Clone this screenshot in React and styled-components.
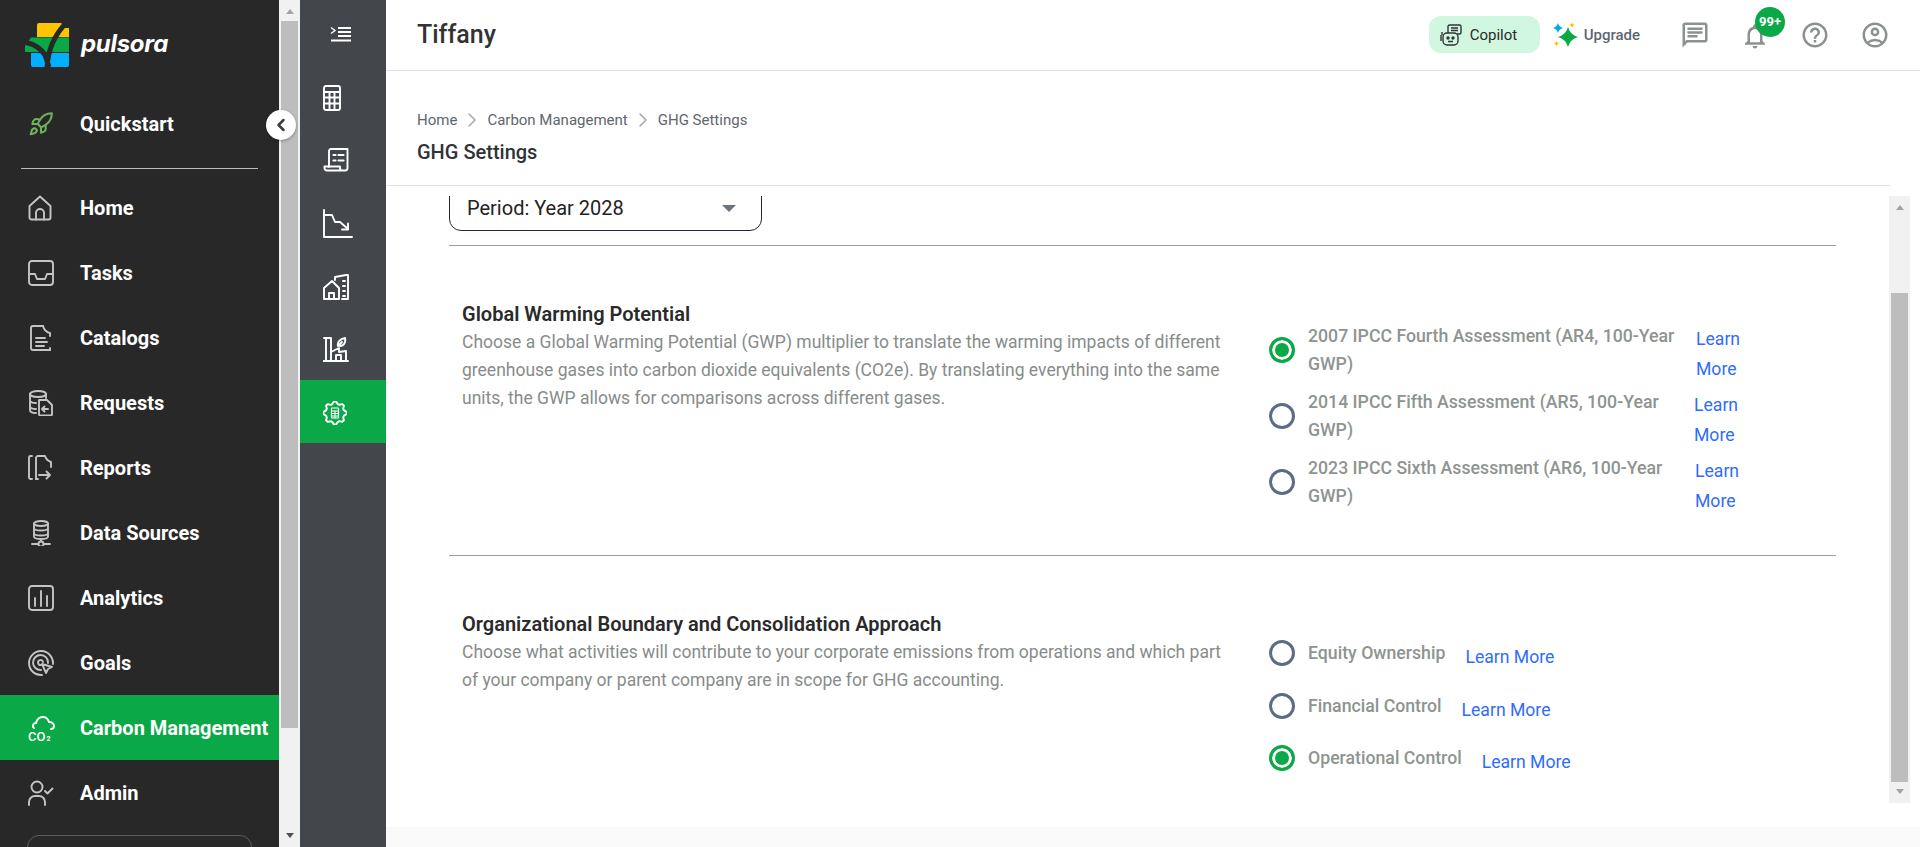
import React from "react"
import styled, { createGlobalStyle } from "styled-components"
import { ChevronLeft, ChevronRight, Rocket } from "lucide-react"
import {
  MdHelpOutline,
  MdOutlineAccountCircle,
  MdOutlineChat,
  MdOutlineNotifications,
} from "react-icons/md"

const GlobalStyle = createGlobalStyle`
  html, body {
    margin: 0;
    height: 847px;
    overflow: hidden;
    background: #fff;
    font-family: Roboto, "Liberation Sans", sans-serif;
  }
  * { box-sizing: border-box; }
`

const Glyph = ({ size = 26, box = 26, children }) => (
  <GlyphSvg width={size} height={size} viewBox={`0 0 ${box} ${box}`}>
    {children}
  </GlyphSvg>
)

const GlyphSvg = styled.svg`
  display: block;
  flex: none;
  fill: none;
  stroke: currentColor;
  stroke-width: 1.9;
  stroke-linecap: round;
  stroke-linejoin: round;
`

// four point star used by the upgrade sparkle
const star = (cx, cy, r) => {
  const k = r * 0.22
  return `M${cx} ${cy - r}Q${cx + k} ${cy - k} ${cx + r} ${cy}Q${cx + k} ${cy + k} ${cx} ${cy + r}Q${cx - k} ${cy + k} ${cx - r} ${cy}Q${cx - k} ${cy - k} ${cx} ${cy - r}Z`
}

// scalloped gear outline, 8 teeth
const gearPath = () => {
  const pts = []
  for (let i = 0; i < 32; i++) {
    const a = (i / 32) * Math.PI * 2
    const r = i % 4 === 0 || i % 4 === 1 ? 11.5 : 9.3
    pts.push(`${(12 + r * Math.cos(a - 0.1)).toFixed(2)} ${(12 + r * Math.sin(a - 0.1)).toFixed(2)}`)
  }
  return `M${pts.join("L")}Z`
}

const HomeIcon = () => (
  <Glyph>
    <path d="M1.500 11 12 1.500 22.500 11V22.500a2 2 0 0 1-2 2H3.500a2 2 0 0 1-2-2Z" />
    <path d="M8 24.500V18a4 4 0 0 1 8 0v6.500" />
  </Glyph>
)
const TasksIcon = () => (
  <Glyph>
    <rect x="1" y="1" width="24" height="24" rx="3" />
    <path d="M1 14h6l2 5h8l2-5h6" />
  </Glyph>
)
const CatalogIcon = () => (
  <Glyph>
    <path d="M15 1H5a2 2 0 0 0-2 2v20a2 2 0 0 0 2 2h17" />
    <path d="M15 1c1 4 3 6 7 7v3M22 23v2" />
    <path d="M8 13h9M8 17h11M8 21h8" />
  </Glyph>
)
const RequestIcon = () => (
  <Glyph>
    <ellipse cx="10" cy="4" rx="8" ry="3" />
    <path d="M2 4v16c0 2 3 3 6 3M18 4v4M2 10c0 2 3 3 6 3M2 16c0 2 3 3 6 3" />
    <path d="M11 10h8l5 5v9a1.500 1.500 0 0 1-1.500 1.500H12.500A1.500 1.500 0 0 1 11 24Z" />
    <path d="M20 19h-6M16.500 16.500 14 19l2.500 2.500" />
  </Glyph>
)
const ReportIcon = () => (
  <Glyph>
    <path d="M4 1H2.500A1.500 1.500 0 0 0 1 2.500v20A1.500 1.500 0 0 0 2.500 24H4" />
    <path d="M8 24V3a2 2 0 0 1 2-2h7c1 3 3 5 6 6v5" />
    <path d="M11 20h11M18.500 16.500 22 20l-3.500 3.500M8 24h2" />
  </Glyph>
)
const DataIcon = () => (
  <Glyph>
    <ellipse cx="13" cy="3.500" rx="7" ry="2.500" />
    <path d="M6 3.500v13c0 1.500 3 2.500 7 2.500s7-1 7-2.500v-13M6 8c0 1.500 3 2.500 7 2.500s7-1 7-2.500M6 13c0 1.500 3 2.500 7 2.500s7-1 7-2.500" />
    <path d="M13 19v2M4 24h6M16 24h6" />
    <circle cx="13" cy="24" r="2.500" />
  </Glyph>
)
const AnalyticsIcon = () => (
  <Glyph>
    <rect x="1" y="1" width="24" height="24" rx="3" />
    <path d="M7 13v8M13 6v15M19 11v10" />
  </Glyph>
)
const GoalsIcon = () => (
  <Glyph>
    <path d="M14 25A12 12 0 1 1 25 14" />
    <path d="M13 20a7.500 7.500 0 1 1 7-7" />
    <path d="M13 15a2.500 2.500 0 1 1 2-3" />
    <path d="M14 14l10 3-4 2-2 4Z" />
  </Glyph>
)
const CarbonIcon = () => (
  <svg width="26" height="26" viewBox="0 0 26 26" style={{ overflow: "visible" }}>
    <path
      d="M6 13c-2-1-1-5 2-5 1-4 4-6 7-6 3 0 5 2 6 5 3 0 5 2 5 4 0 2-1 3-3 3"
      fill="none"
      stroke="currentColor"
      strokeWidth="1.900"
      strokeLinecap="round"
    />
    <text x="0" y="26" fontSize="13" fontWeight="500" fill="currentColor" fontFamily="Roboto">
      CO
    </text>
    <text x="18.500" y="26" fontSize="7" fontWeight="700" fill="currentColor" fontFamily="Roboto">
      2
    </text>
  </svg>
)
const AdminIcon = () => (
  <Glyph>
    <circle cx="9" cy="7" r="5.500" />
    <path d="M1 25v-3a6 6 0 0 1 6-6h4a6 6 0 0 1 6 6v3" />
    <path d="M17 11l2.500 2.500L24.500 8.500" />
  </Glyph>
)

const TermIcon = () => (
  <svg width="22" height="16" viewBox="0 0 22 16" fill="none" stroke="currentColor">
    <path d="M1 1.500 5 4.500 1 7.500" strokeWidth="1.400" />
    <path d="M8 2h13M8 6h13M8 10h13M1 14.500h20" strokeWidth="2" />
  </svg>
)
const CalcIcon = () => (
  <Glyph size={26}>
    <rect x="1" y="1" width="16" height="24" rx="2" />
    <path d="M1 7h16M1 12.500h16M1 18.500h16M6.500 7v18M11.500 7v18" />
  </Glyph>
)
const LedgerIcon = () => (
  <Glyph size={26}>
    <path d="M6 19V3a2 2 0 0 1 2-2h16.500v19a2.500 2.500 0 0 1-2.500 2.500H4A2.500 2.500 0 0 1 1.500 20v-1.500H17V20a2.500 2.500 0 0 0 2.500 2.500" />
    <path d="M10.500 7h2M15.500 7h5M10.500 12.500h2M15.500 12.500h5" strokeWidth="2.200" />
  </Glyph>
)
const TrendIcon = () => (
  <Glyph size={30} box={30}>
    <path d="M1 1v27h28" />
    <path d="M1 6h8l3 7h5l8 7" />
    <path d="M25 14.500V20.500h-6" />
  </Glyph>
)
const BuildingIcon = () => (
  <Glyph size={26}>
    <path d="M1 14 9 7l7 7v11H1ZM6 25v-6h5v6" />
    <path d="M12 6V3l11-2h2v24h-6" />
    <path d="M20 7h2M20 12h2M20 17h2M20 22h2" />
  </Glyph>
)
const FactoryIcon = () => (
  <Glyph size={26}>
    <path d="M1 1h7v22M3 1v22M0 24h25M8 15l8-4v4l7-1v9" />
    <path d="M13 23v-5h5v5" />
    <path d="M15 9c-1-4 2-7 7-8 1 4-1 8-5 8M15 9l4-4" />
  </Glyph>
)
const GearIcon = () => (
  <Glyph size={24} box={24}>
    <path d={gearPath()} />
    <rect x="8.500" y="7" width="7" height="10" rx="0.500" strokeWidth="1.200" />
    <path d="M8.500 10h7M8.500 12.500h7M8.500 15h7M12 10v7" strokeWidth="1" />
  </Glyph>
)

const Logo = () => (
  <svg width="46" height="46" viewBox="0 0 46 46">
    <path d="M15 1h22a2 2 0 0 1 1 2v12H13V3a2 2 0 0 1 2-2Z" fill="#ffc400" />
    <path d="M39 6h6v9h-9Z" fill="#ffc400" />
    <path d="M7 15.500h38V30H1L1 24Z" fill="#0aa846" />
    <path d="M7 31h14l2 14H9a2 2 0 0 1-2-2Z" fill="#00b0ff" />
    <path d="M24 31h21v12a2 2 0 0 1-2 2H24Z" fill="#00b0ff" />
    <path d="M1 20c8 2 16 6 20 13l4 12" fill="none" stroke="#282828" strokeWidth="5" />
    <path d="M43 0C33 10 24 24 23 46" fill="none" stroke="#282828" strokeWidth="5" />
  </svg>
)

const navItems = [
  { label: "Home", icon: <HomeIcon /> },
  { label: "Tasks", icon: <TasksIcon /> },
  { label: "Catalogs", icon: <CatalogIcon /> },
  { label: "Requests", icon: <RequestIcon /> },
  { label: "Reports", icon: <ReportIcon /> },
  { label: "Data Sources", icon: <DataIcon /> },
  { label: "Analytics", icon: <AnalyticsIcon /> },
  { label: "Goals", icon: <GoalsIcon /> },
  { label: "Carbon Management", icon: <CarbonIcon />, active: true },
  { label: "Admin", icon: <AdminIcon /> },
]

const subItems = [
  { key: "calc", icon: <CalcIcon /> },
  { key: "ledger", icon: <LedgerIcon /> },
  { key: "trend", icon: <TrendIcon /> },
  { key: "building", icon: <BuildingIcon /> },
  { key: "factory", icon: <FactoryIcon /> },
  { key: "gear", icon: <GearIcon />, active: true },
]

const gwpOptions = [
  { label: "2007 IPCC Fourth Assessment (AR4, 100-Year GWP)", width: 388, checked: true },
  { label: "2014 IPCC Fifth Assessment (AR5, 100-Year GWP)", width: 386 },
  { label: "2023 IPCC Sixth Assessment (AR6, 100-Year GWP)", width: 387 },
]

const boundaryOptions = [
  { label: "Equity Ownership" },
  { label: "Financial Control" },
  { label: "Operational Control", checked: true },
]

const App = () => {
  return (
    <Page>
      <GlobalStyle />
      <Sidebar>
        <Brand>
          <Logo />
          <BrandName>pulsora</BrandName>
        </Brand>
        <NavRow>
          <NavIcon $color="#6fb35c">
            <Rocket size={26} strokeWidth={1.9} />
          </NavIcon>
          <NavLabel>Quickstart</NavLabel>
        </NavRow>
        <NavDivider />
        {navItems.map((item) => (
          <NavRow key={item.label} $active={item.active}>
            <NavIcon $color={item.active ? "#fff" : "#c4c4c4"}>{item.icon}</NavIcon>
            <NavLabel>{item.label}</NavLabel>
          </NavRow>
        ))}
        <BottomBox />
      </Sidebar>

      <Track>
        <ArrowUp />
        <Thumb $top={7} $height={707} />
        <Spacer />
        <ArrowDown />
      </Track>

      <CollapseButton>
        <ChevronLeft size={20} strokeWidth={3} />
      </CollapseButton>

      <SubNav>
        <SubToggle>
          <TermIcon />
        </SubToggle>
        {subItems.map((item) => (
          <SubItem key={item.key} $active={item.active}>
            {item.icon}
          </SubItem>
        ))}
      </SubNav>

      <Main>
        <Header>
          <OrgName>Tiffany</OrgName>
          <HeaderActions>
            <CopilotButton>
              <svg width="22" height="22" viewBox="0 0 22 22" fill="none" stroke="#333" strokeWidth="1.400">
                <rect x="8" y="1" width="13" height="9" rx="1.500" />
                <path d="M11 4h7M11 6.500h7" />
                <rect x="3" y="9" width="15" height="12" rx="4" fill="#d1f7e0" />
                <circle cx="8" cy="14" r="1" fill="#333" />
                <circle cx="13" cy="14" r="1" fill="#333" />
                <path d="M8 17.500h5M1 11v6M2 8v3" />
              </svg>
              Copilot
            </CopilotButton>
            <UpgradeButton>
              <svg width="26" height="26" viewBox="0 0 26 26">
                <path d={star(15, 15, 10)} fill="#0aa846" />
                <path d={star(5, 6, 5)} fill="#00a8f0" />
                <path d={star(19, 3, 2.500)} fill="#ffc400" />
                <path d={star(3.500, 21.500, 2.500)} fill="#ffc400" />
              </svg>
              Upgrade
            </UpgradeButton>
            <IconSlot $left={40}>
              <MdOutlineChat size={30} />
            </IconSlot>
            <IconSlot $left={30} $down={2}>
              <MdOutlineNotifications size={30} />
              <Badge>99+</Badge>
            </IconSlot>
            <IconSlot $left={30}>
              <MdHelpOutline size={30} />
            </IconSlot>
            <IconSlot $left={30}>
              <MdOutlineAccountCircle size={30} />
            </IconSlot>
          </HeaderActions>
        </Header>

        <PageHead>
          <Crumbs>
            <span>Home</span>
            <ChevronRight size={24} color="#a3a7a8" strokeWidth={1.500} />
            <span>Carbon Management</span>
            <ChevronRight size={24} color="#a3a7a8" strokeWidth={1.500} />
            <span>GHG Settings</span>
          </Crumbs>
          <PageTitle>GHG Settings</PageTitle>
        </PageHead>

        <ScrollRow>
          <ScrollView>
            <ScrollContent>
              <PeriodSelect>
                Period: Year 2028
                <Caret />
              </PeriodSelect>
              <Rule $top={14} />
              <Section $top={54} $bottom={45}>
                <SectionText>
                  <SectionTitle>Global Warming Potential</SectionTitle>
                  <SectionDesc>
                    Choose a Global Warming Potential (GWP) multiplier to translate the warming impacts of
                    different greenhouse gases into carbon dioxide equivalents (CO2e). By translating everything
                    into the same units, the GWP allows for comparisons across different gases.
                  </SectionDesc>
                </SectionText>
                <OptionList $top={22} $gap={10}>
                  {gwpOptions.map((option) => (
                    <WrappedOption key={option.label}>
                      <Radio $checked={option.checked} />
                      <OptionLabel style={{ width: option.width }}>{option.label}</OptionLabel>
                      <LearnStack href="#">Learn More</LearnStack>
                    </WrappedOption>
                  ))}
                </OptionList>
              </Section>
              <Rule />
              <Section $top={54} $bottom={0}>
                <SectionText>
                  <SectionTitle>Organizational Boundary and Consolidation Approach</SectionTitle>
                  <SectionDesc>
                    Choose what activities will contribute to your corporate emissions from operations and which
                    part of your company or parent company are in scope for GHG accounting.
                  </SectionDesc>
                </SectionText>
                <OptionList $top={29} $gap={24.500}>
                  {boundaryOptions.map((option) => (
                    <InlineOption key={option.label}>
                      <Radio $checked={option.checked} />
                      <OptionLabel>{option.label}</OptionLabel>
                      <LearnInline href="#">Learn More</LearnInline>
                    </InlineOption>
                  ))}
                </OptionList>
              </Section>
            </ScrollContent>
          </ScrollView>
          <ContentTrack>
            <ArrowUp />
            <Thumb $top={83} $height={489} />
            <Spacer />
            <ArrowDown $soft />
          </ContentTrack>
        </ScrollRow>
        <Footer />
      </Main>
    </Page>
  )
}

export default App

const Page = styled.div`
  display: flex;
  width: 1920px;
  height: 847px;
  overflow: hidden;
  position: relative;
`

const Sidebar = styled.nav`
  width: 279px;
  flex: none;
  background: #282828;
  overflow: hidden;
`

const Brand = styled.div`
  height: 91px;
  display: flex;
  align-items: flex-start;
  gap: 11px;
  padding: 22px 0 0 24px;
`

const BrandName = styled.span`
  font-family: Inter, sans-serif;
  font-style: italic;
  font-weight: 700;
  font-size: 24px;
  line-height: 44px;
  letter-spacing: -0.3px;
  color: #fff;
`

const NavRow = styled.div`
  height: 65px;
  display: flex;
  align-items: center;
  padding-left: 28px;
  background: ${(p) => (p.$active ? "#0aa846" : "transparent")};
`

const NavIcon = styled.span`
  width: 52px;
  flex: none;
  display: flex;
  color: ${(p) => p.$color};
`

const NavLabel = styled.span`
  font-size: 20px;
  font-weight: 700;
  color: #fff;
  white-space: nowrap;
`

const NavDivider = styled.div`
  height: 1px;
  margin: 12px 21px 6px;
  background: #b9beb9;
`

const BottomBox = styled.div`
  height: 40px;
  margin: 10px 27px 0;
  border: 1px solid #5a5d5a;
  border-radius: 12px;
`

const Track = styled.div`
  width: 21px;
  flex: none;
  height: 847px;
  background: #f1f1f1;
  display: flex;
  flex-direction: column;
  align-items: center;
`

const ContentTrack = styled(Track)`
  height: 607px;
`

const Thumb = styled.div`
  width: 17px;
  height: ${(p) => p.$height}px;
  margin-top: ${(p) => p.$top}px;
  background: #bdbdbd;
`

const Spacer = styled.div`
  flex: 1;
`

const ArrowUp = styled.div`
  width: 0;
  height: 0;
  margin-top: 9px;
  border-left: 4.500px solid transparent;
  border-right: 4.500px solid transparent;
  border-bottom: 5px solid #a3a3a3;
`

const ArrowDown = styled.div`
  width: 0;
  height: 0;
  margin-bottom: 9px;
  border-left: 4.500px solid transparent;
  border-right: 4.500px solid transparent;
  border-top: 5px solid ${(p) => (p.$soft ? "#a3a3a3" : "#505050")};
`

const CollapseButton = styled.div`
  position: absolute;
  left: 266px;
  top: 110px;
  width: 30px;
  height: 30px;
  border-radius: 50%;
  background: #fff;
  box-shadow: 0 1px 3px rgba(0, 0, 0, 0.35);
  color: #3a3f44;
  display: flex;
  align-items: center;
  justify-content: center;
`

const SubNav = styled.aside`
  width: 86px;
  flex: none;
  background: #43474b;
  color: #fff;
`

const SubToggle = styled.div`
  height: 65px;
  display: flex;
  align-items: center;
  padding: 2px 0 0 30px;
`

const SubItem = styled.div`
  height: 63px;
  display: flex;
  align-items: center;
  padding: 2px 0 0 23px;
  background: ${(p) => (p.$active ? "#0aa846" : "transparent")};
`

const Main = styled.main`
  flex: 1;
  min-width: 0;
  display: flex;
  flex-direction: column;
  background: #fff;
`

const Header = styled.header`
  height: 71px;
  flex: none;
  display: flex;
  align-items: center;
  justify-content: space-between;
  padding: 0 30px 1px 31px;
  border-bottom: 1px solid #dde0e4;
`

const OrgName = styled.h1`
  margin: 0;
  font-size: 25px;
  font-weight: 500;
  color: #333;
`

const HeaderActions = styled.div`
  display: flex;
  align-items: center;
`

const CopilotButton = styled.div`
  width: 111px;
  height: 37px;
  border-radius: 12px;
  background: #d1f7e0;
  display: flex;
  align-items: center;
  gap: 8px;
  padding-left: 11px;
  font-size: 15px;
  color: #2a2a2a;
`

const UpgradeButton = styled.div`
  display: flex;
  align-items: center;
  gap: 5px;
  margin-left: 13px;
  font-size: 15px;
  font-weight: 500;
  color: #5d6673;
`

const IconSlot = styled.span`
  position: relative;
  display: flex;
  margin-left: ${(p) => p.$left}px;
  margin-top: ${(p) => p.$down || 0}px;
  color: #8a918e;
`

const Badge = styled.span`
  position: absolute;
  left: 15px;
  top: -14px;
  width: 30px;
  height: 30px;
  border-radius: 50%;
  background: #0aa846;
  color: #fff;
  font-size: 13px;
  font-weight: 700;
  display: flex;
  align-items: center;
  justify-content: center;
`

const PageHead = styled.div`
  height: 115px;
  flex: none;
  padding: 40px 0 0 31px;
  border-bottom: 1px solid #e2e3e5;
  margin-right: 30px;
`

const Crumbs = styled.div`
  display: flex;
  align-items: center;
  gap: 3px;
  height: 18px;
  font-size: 15px;
  color: #5f666c;
`

const PageTitle = styled.h2`
  margin: 10px 0 0;
  font-size: 20px;
  font-weight: 500;
  line-height: 26px;
  color: #2f3338;
`

const ScrollRow = styled.div`
  flex: none;
  display: flex;
  height: 607px;
  margin-top: 10px;
  padding-right: 10px;
`

const ScrollView = styled.div`
  flex: 1;
  min-width: 0;
  overflow: hidden;
`

const ScrollContent = styled.div`
  margin-top: -18px;
  padding: 0 53px 0 63px;
`

const PeriodSelect = styled.div`
  width: 313px;
  height: 53px;
  display: flex;
  align-items: center;
  justify-content: space-between;
  padding: 7px 25px 0 17px;
  border: 1px solid #1f2937;
  border-radius: 12px;
  font-size: 20px;
  color: #222;
`

const Caret = styled.span`
  width: 0;
  height: 0;
  border-left: 7px solid transparent;
  border-right: 7px solid transparent;
  border-top: 7px solid #6b7280;
`

const Rule = styled.div`
  height: 1px;
  margin-top: ${(p) => p.$top || 0}px;
  background: #9b9d9f;
`

const Section = styled.section`
  display: grid;
  grid-template-columns: 770px 1fr;
  column-gap: 37px;
  padding: ${(p) => p.$top}px 0 ${(p) => p.$bottom}px 13px;
`

const SectionText = styled.div``

const SectionTitle = styled.h3`
  margin: 0;
  font-size: 20px;
  font-weight: 600;
  line-height: 28px;
  color: #2a2a2a;
`

const SectionDesc = styled.p`
  margin: 0;
  font-size: 17.500px;
  line-height: 28px;
  color: #878c8a;
`

const OptionList = styled.div`
  display: flex;
  flex-direction: column;
  gap: ${(p) => p.$gap}px;
  padding-top: ${(p) => p.$top}px;
`

const WrappedOption = styled.div`
  display: flex;
  align-items: center;
`

const InlineOption = styled.div`
  display: flex;
  align-items: center;
`

const Radio = styled.span`
  width: 26px;
  height: 26px;
  flex: none;
  margin-right: 13px;
  border-radius: 50%;
  border: 3px solid ${(p) => (p.$checked ? "#0aa846" : "#5f6b85")};
  background: ${(p) => (p.$checked ? "#0aa846" : "#fff")};
  box-shadow: ${(p) => (p.$checked ? "inset 0 0 0 3px #fff" : "none")};
`

const OptionLabel = styled.span`
  flex: none;
  font-size: 17.700px;
  font-weight: 500;
  line-height: 28px;
  color: #8e9490;
`

const LearnStack = styled.a`
  width: 50px;
  align-self: flex-start;
  margin: 2px 0 -6px;
  font-size: 17.600px;
  line-height: 30px;
  color: #2f6bff;
  text-decoration: none;
`

const LearnInline = styled.a`
  margin: 4px 0 -4px 20px;
  font-size: 17.600px;
  line-height: 28px;
  color: #2f6bff;
  text-decoration: none;
`

const Footer = styled.div`
  height: 20px;
  margin-top: 24px;
  background: #f9f9f9;
`
